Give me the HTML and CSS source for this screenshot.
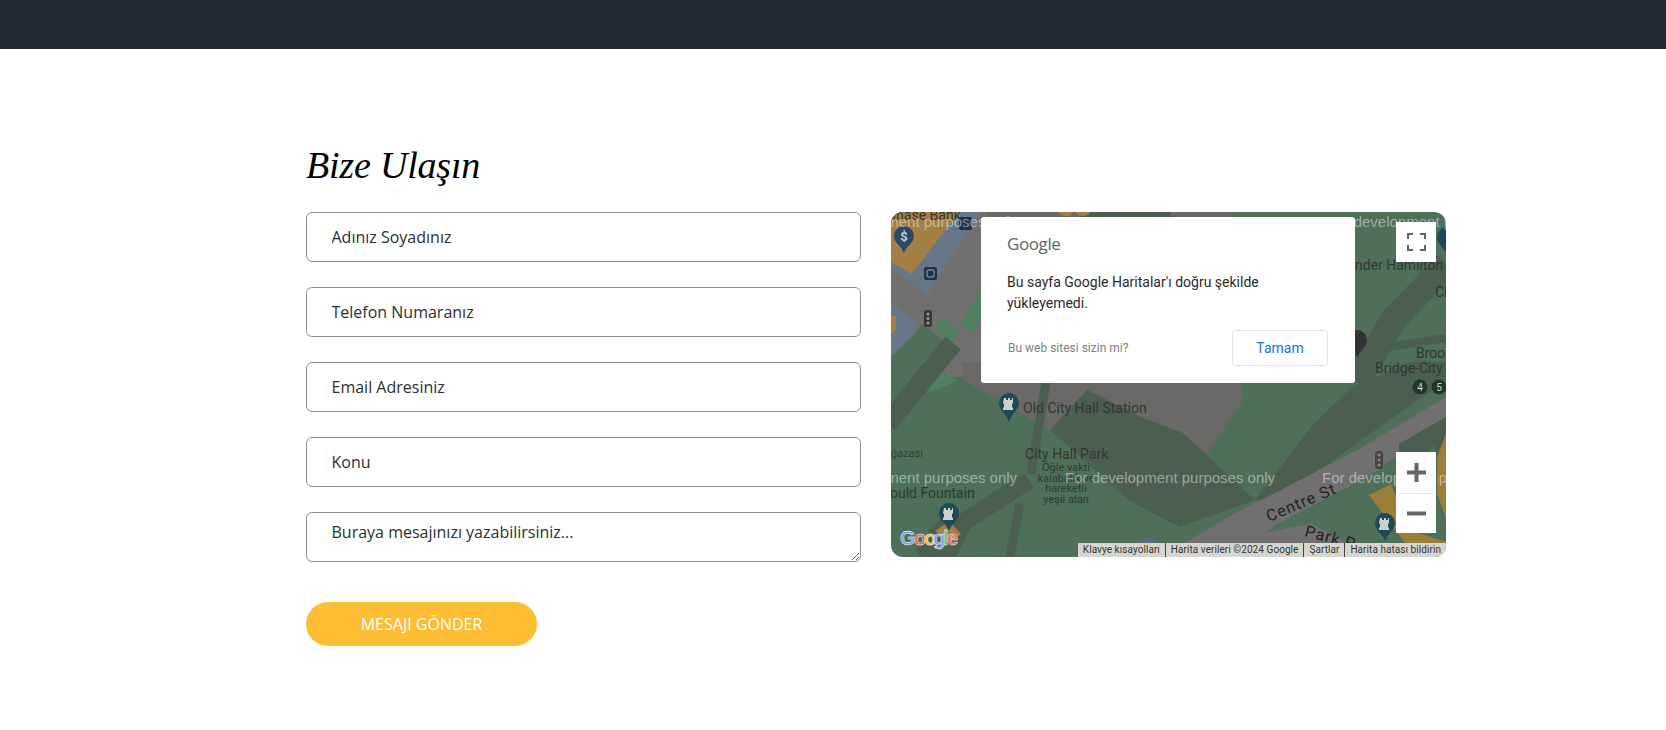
FILE: index.html
```html
<!DOCTYPE html>
<html lang="tr">
<head>
  <meta charset="UTF-8" />
  <meta name="viewport" content="width=device-width, initial-scale=1.0"/>
  <title>Bize Ulaşın</title>
  <link rel="stylesheet" href="styles.css">
</head>
<body>
  <header class="topbar"></header>

  <section class="contact">
    <h1 class="contact-title">Bize Ulaşın</h1>
    <div class="contact-row">
      <form class="contact-form">
        <input type="text" placeholder="Adınız Soyadınız" />
        <input type="tel" placeholder="Telefon Numaranız" />
        <input type="email" placeholder="Email Adresiniz" />
        <input type="text" placeholder="Konu" />
        <textarea placeholder="Buraya mesajınızı yazabilirsiniz..."></textarea>
        <button type="button" class="submit-btn">MESAJI GÖNDER</button>
      </form>

      <div class="map">
        <svg class="map-canvas" viewBox="0 0 555 345" width="555" height="345">
          <rect width="555" height="345" fill="#4f7058"/>

          <!-- strip above the dialog -->
          <rect x="90" y="0" width="100" height="5" fill="#6a6968"/>
          <rect x="190" y="0" width="90" height="5" fill="#4a5f4f"/>
          <rect x="280" y="0" width="60" height="5" fill="#6a6968"/>
          <ellipse cx="175" cy="0" rx="7" ry="4" fill="#a37f45"/>
          <ellipse cx="192" cy="0" rx="7" ry="4" fill="#a37f45"/>

          <!-- city blocks, top left -->
          <polygon points="0,0 95,0 95,165 50,165 0,100" fill="#716f6f"/>
          <polygon points="0,0 90,0 36,84 0,56" fill="#687787"/>
          <polygon points="0,0 68,0 21,62 0,50" fill="#a37f45"/>
          <polygon points="0,91 24,108 24,121 0,145" fill="#687787"/>
          <polygon points="0,103 5,105 5,118 0,122" fill="#a37f45"/>
          <polygon points="52,105 69,120 60,131 44,116" fill="#4f8060"/>
          <polygon points="92,72 92,104 82,122 70,112" fill="#4f8060"/>
          <polygon points="0,148 32,112 60,135 20,172 0,195" fill="#4f7058"/>
          <polygon points="52,160 68,168 40,180 30,178" fill="#4f8060"/>

          <!-- grey block and dark building below the dialog -->
          <polygon points="72,150 345,150 352,188 312,248 159,218 72,168" fill="#6a6968"/>
          <polygon points="159,218 196,178 250,205 292,221 364,288 289,315 240,290" fill="#4a5f4f"/>
          <polygon points="461,175 519,150 555,150 555,168 386,288 364,288 420,215" fill="#4a5f4f"/>

          <!-- park paths -->
          <line x1="62" y1="131" x2="-4" y2="212" stroke="#4a5f4f" stroke-width="20"/>
          <line x1="155" y1="170" x2="140" y2="262" stroke="#4a5f4f" stroke-width="9"/>
          <path d="M138 268 L76 308 L30 345" fill="none" stroke="#4a5f4f" stroke-width="18"/>
          <line x1="129" y1="291" x2="119" y2="345" stroke="#4a5f4f" stroke-width="9"/>
          <polygon points="35,345 38,318 62,296 80,315 65,345" fill="#4a5f4f"/>
          <path d="M556 52 L502 108 L466 170" fill="none" stroke="#4a5f4f" stroke-width="26"/>
          <line x1="466" y1="140" x2="555" y2="126" stroke="#4a5f4f" stroke-width="8"/>

          <!-- right side roads and gold block -->
          <polygon points="555,185 555,205 482,262 386,312 345,345 270,345 346,300 386,280 470,236" fill="#716f6f"/>
          <polygon points="508,270 508,232 555,205 555,235 535,285" fill="#4a5f4f"/>
          <polygon points="515,262 545,232 535,270 525,282" fill="#4f7058"/>
          <polygon points="555,222 546,245 546,282 555,306" fill="#9a7e3a"/>
          <polygon points="478,283 500,272 518,318 555,330 555,345 525,345" fill="#9a7e3a"/>
          <path d="M300 345 Q340 325 420 312 L470 338 L470 345 Z" fill="#716f6f"/>
          <polygon points="205,345 260,325 280,345" fill="#5d6a78"/>
          <polygon points="44,319 58,309 70,322 58,331" fill="#a37f45"/>

          <!-- labels -->
          <g class="map-label">
            <text x="132" y="201">Old City Hall Station</text>
            <text x="134" y="247">City Hall Park</text>
            <text x="-1" y="286">ould Fountain</text>
            <text x="464" y="58">nder Hamilton</text>
            <text x="544" y="85">Cl</text>
            <text x="525" y="146">Brook</text>
            <text x="484" y="161">Bridge-City</text>
            <text x="-4" y="8">Chase Bank</text>
          </g>
          <g class="map-label-sm">
            <text x="175" y="259">Öğle vakti</text>
            <text x="175" y="270">kalabalık ve</text>
            <text x="175" y="280">hareketli</text>
            <text x="175" y="291">yeşil alan</text>
          </g>
          <text class="map-label-gazasi" x="0" y="245">ğazası</text>
          <text class="map-street" transform="translate(378 310) rotate(-23)">Centre St</text>
          <text class="map-street" transform="translate(413 324) rotate(15)">Park P</text>

          <!-- pins -->
          <g fill="#1d4a56">
            <path d="M118 181 a10 10 0 0 1 10 10 c0 7 -7 10 -10 19 c-3 -9 -10 -12 -10 -19 a10 10 0 0 1 10 -10z"/>
            <path d="M58 291 a10 10 0 0 1 10 10 c0 7 -7 10 -10 18 c-3 -8 -10 -11 -10 -18 a10 10 0 0 1 10 -10z"/>
            <path d="M494 301 a10 10 0 0 1 10 10 c0 7 -7 10 -10 18 c-3 -8 -10 -11 -10 -18 a10 10 0 0 1 10 -10z"/>
            <path d="M466 118 a10 10 0 0 1 10 10 c0 7 -7 10 -10 18 c-3 -8 -10 -11 -10 -18 a10 10 0 0 1 10 -10z" fill="#333"/>
            <path d="M556 15 a10 10 0 0 1 10 10 c0 7 -7 10 -10 18 c-3 -8 -10 -11 -10 -18 a10 10 0 0 1 10 -10z"/>
          </g>
          <g fill="#c8d2d0">
            <path d="M113 186 h2 v2 h2 v-2 h2 v2 h2 v-2 h1 v5 l-1 1 v3 l1 1 v2 h-10 v-2 l1 -1 v-3 l-1 -1z"/>
            <path d="M53 296 h2 v2 h2 v-2 h2 v2 h2 v-2 h1 v5 l-1 1 v3 l1 1 v2 h-10 v-2 l1 -1 v-3 l-1 -1z"/>
            <path d="M489 306 h2 v2 h2 v-2 h2 v2 h2 v-2 h1 v5 l-1 1 v3 l1 1 v2 h-10 v-2 l1 -1 v-3 l-1 -1z"/>
          </g>
          <path d="M13 14 a10 10 0 0 1 10 10 c0 7 -7 9 -10 17 c-3 -8 -10 -10 -10 -17 a10 10 0 0 1 10 -10z" fill="#2c4866"/>
          <text class="map-pin-sign" x="13" y="29">$</text>

          <!-- bus stops and traffic lights -->
          <rect x="33" y="55" width="13" height="13" rx="2" fill="#1d3448"/>
          <rect x="36" y="58" width="7" height="7" rx="1" fill="none" stroke="#9fb0bf" stroke-width="1"/>
          <rect x="68" y="5" width="13" height="13" rx="2" fill="#1d3448"/>
          <rect x="33" y="98" width="8" height="17" rx="3" fill="#3a3535"/>
          <g fill="#9a9896">
            <circle cx="37" cy="102" r="1.6"/><circle cx="37" cy="106.5" r="1.6"/><circle cx="37" cy="111" r="1.6"/>
          </g>
          <rect x="484" y="239" width="8" height="18" rx="3" fill="#4a4444"/>
          <g fill="#8a8886">
            <circle cx="488" cy="243" r="1.6"/><circle cx="488" cy="248" r="1.6"/><circle cx="488" cy="253" r="1.6"/>
          </g>
          <circle cx="529" cy="175" r="7.5" fill="#1d3a2a"/>
          <circle cx="548" cy="175" r="7.5" fill="#1d3a2a"/>
          <text class="map-line-no" x="529" y="179">4</text>
          <text class="map-line-no" x="548" y="179">5</text>

          <!-- development watermark -->
          <g class="map-watermark">
            <text x="-84" y="15">For development purposes only</text>
            <text x="436" y="15">For development purposes only</text>
            <text x="-84" y="271">For development purposes only</text>
            <text x="174" y="271">For development purposes only</text>
            <text x="431" y="271">For development purposes only</text>
          </g>

          <!-- google mark -->
          <g class="map-google">
            <text x="9" y="333" fill="#7ea3e6">G</text>
            <text x="23" y="333" fill="#e0665a">o</text>
            <text x="33" y="333" fill="#e6c04f">o</text>
            <text x="42" y="333" fill="#7ea3e6">g</text>
            <text x="52" y="333" fill="#6fb878">l</text>
            <text x="56" y="333" fill="#e0665a">e</text>
          </g>
        </svg>

        <div class="map-dialog">
          <div class="dialog-logo">Google</div>
          <p class="dialog-text">Bu sayfa Google Haritalar'ı doğru şekilde yükleyemedi.</p>
          <div class="dialog-foot">
            <span class="dialog-link">Bu web sitesi sizin mi?</span>
            <button type="button" class="dialog-btn">Tamam</button>
          </div>
        </div>

        <button type="button" class="map-ctrl map-fullscreen" aria-label="Tam ekran">
          <svg viewBox="0 0 19 18" width="19" height="18">
            <path d="M1 6V1h5M13 1h5v5M18 12v5h-5M6 17H1v-5" fill="none" stroke="#666" stroke-width="2"/>
          </svg>
        </button>

        <div class="map-ctrl map-zoom">
          <button type="button" class="zoom-btn" aria-label="Yakınlaştır">
            <svg viewBox="0 0 19 19" width="19" height="19">
              <path d="M0 9.5h19M9.5 0v19" fill="none" stroke="#666" stroke-width="4"/>
            </svg>
          </button>
          <button type="button" class="zoom-btn" aria-label="Uzaklaştır">
            <svg viewBox="0 0 19 19" width="19" height="19">
              <path d="M0 9.5h19" fill="none" stroke="#666" stroke-width="4"/>
            </svg>
          </button>
        </div>

        <div class="map-attrib">
          <span>Klavye kısayolları</span>
          <span>Harita verileri ©2024 Google</span>
          <span>Şartlar</span>
          <span>Harita hatası bildirin</span>
        </div>
      </div>
    </div>
  </section>
</body>
</html>
```

FILE: styles.css
```css
* {
  box-sizing: border-box;
  margin: 0;
  padding: 0;
}

body {
  font-family: 'Open Sans', sans-serif;
  background: #fff;
  color: #212529;
  overflow: hidden;
}

.topbar {
  height: 49px;
  background: #212934;
}

.contact {
  padding: 92px 0 0 306px;
}

.contact-title {
  font-family: 'Liberation Serif', serif;
  font-style: italic;
  font-weight: 400;
  font-size: 38px;
  line-height: 48px;
  letter-spacing: -0.2px;
  color: #000;
  margin-bottom: 23px;
}

.contact-row {
  display: flex;
  gap: 30px;
  width: 1140px;
}

.contact-form {
  width: 555px;
  display: flex;
  flex-direction: column;
  gap: 25px;
}

.contact-form input,
.contact-form textarea {
  display: block;
  width: 100%;
  height: 50px;
  padding: 0 24.5px;
  border: 1px solid #8e8e8e;
  border-radius: 6px;
  background: #fff;
  font-family: inherit;
  font-size: 16px;
  color: #2b2f33;
  outline: none;
}

.contact-form textarea {
  padding-top: 7px;
  line-height: 24px;
}

.contact-form input::placeholder,
.contact-form textarea::placeholder {
  color: #2b2f33;
  opacity: 1;
}

.submit-btn {
  width: 231px;
  height: 44px;
  margin-top: 15px;
  border: none;
  border-radius: 22px;
  background: #ffbd33;
  color: #fff;
  font-family: inherit;
  font-size: 16px;
}

/* map */
.map {
  position: relative;
  width: 555px;
  height: 345px;
  border-radius: 12px;
  overflow: hidden;
  font-family: Roboto, sans-serif;
}

.map-canvas {
  display: block;
}

.map-label {
  font-family: Roboto, sans-serif;
  font-size: 14px;
  fill: #2f3832;
}

.map-label-sm {
  font-family: Roboto, sans-serif;
  font-size: 11px;
  fill: #2f3832;
  text-anchor: middle;
}

.map-label-gazasi {
  font-family: Roboto, sans-serif;
  font-size: 11px;
  fill: #333d36;
}

.map-street {
  font-family: Roboto, sans-serif;
  font-size: 16px;
  letter-spacing: 1px;
  fill: #222;
}

.map-pin-sign {
  font-family: Roboto, sans-serif;
  font-size: 13px;
  font-weight: 700;
  fill: #c5ced8;
  text-anchor: middle;
}

.map-line-no {
  font-family: Roboto, sans-serif;
  font-size: 10px;
  fill: #cfd8d2;
  text-anchor: middle;
}

.map-watermark {
  font-family: 'Liberation Sans', sans-serif;
  font-size: 15px;
  fill: #fff;
  fill-opacity: 0.45;
}

.map-google {
  font-family: 'Liberation Sans', sans-serif;
  font-size: 20px;
  font-weight: 700;
  stroke: #fff;
  stroke-width: 0.4px;
}

.map-dialog {
  position: absolute;
  left: 90px;
  top: 5px;
  width: 374px;
  height: 166px;
  padding: 15px 27px 0 26px;
  background: #fff;
  border-radius: 3px;
}

.dialog-logo {
  font-family: 'Open Sans', sans-serif;
  font-size: 17px;
  line-height: 24px;
  letter-spacing: -0.4px;
  color: #5f6368;
}

.dialog-text {
  margin-top: 16px;
  font-size: 14px;
  line-height: 21px;
  color: #2a2a2a;
}

.dialog-foot {
  display: flex;
  justify-content: space-between;
  align-items: center;
  margin-top: 16px;
}

.dialog-link {
  padding-left: 1px;
  font-size: 12px;
  color: #808080;
}

.dialog-btn {
  width: 96px;
  height: 36px;
  border: 1px solid #e3e3e3;
  border-radius: 4px;
  background: #fff;
  color: #1a73e8;
  font-family: inherit;
  font-size: 14px;
}

.map-ctrl {
  position: absolute;
  left: 505px;
  width: 40px;
  border: none;
  background: #fff;
}

.map-fullscreen {
  top: 10px;
  height: 40px;
  display: flex;
  align-items: center;
  justify-content: center;
}

.map-zoom {
  top: 240px;
  height: 81px;
  display: flex;
  flex-direction: column;
}

.zoom-btn {
  height: 40.5px;
  display: flex;
  align-items: center;
  justify-content: center;
  border: none;
  background: none;
}

.zoom-btn + .zoom-btn {
  border-top: 1px solid #e6e6e6;
  margin: 0 4px;
}

.map-attrib {
  position: absolute;
  right: 0;
  bottom: 0;
  height: 14px;
  display: flex;
  background: #d6d6d0;
  font-size: 10px;
  line-height: 14px;
  letter-spacing: 0.06px;
  color: #333;
}

.map-attrib span {
  padding: 0 5px;
  white-space: nowrap;
}

.map-attrib span + span {
  border-left: 1px solid #444;
}
```
